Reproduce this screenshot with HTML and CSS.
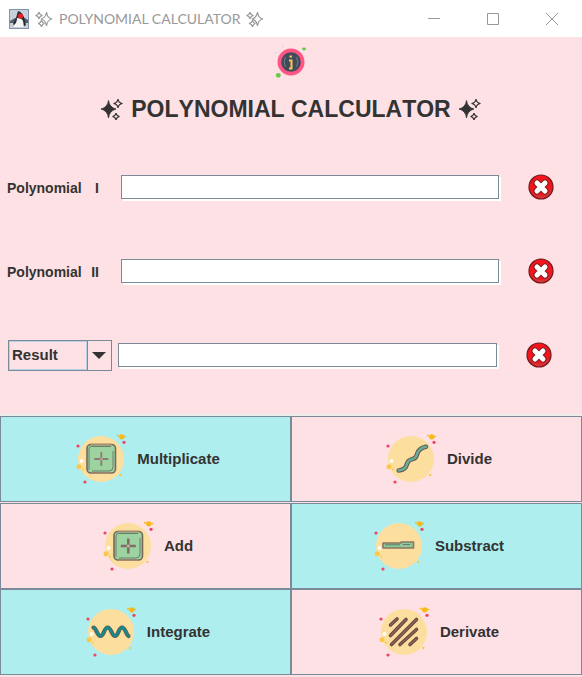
FILE: index.html
```html
<!DOCTYPE html>
<html lang="en">
<head>
<meta charset="utf-8">
<title>Polynomial Calculator</title>
<link rel="stylesheet" href="styles.css">
</head>
<body>
<svg class="defs" aria-hidden="true">
  <defs>
    <symbol id="sparkles" viewBox="0 0 22 22">
      <path d="M7.500 2.500Q8.500 9.500 15 11Q8.500 12.500 7.500 20Q6.500 12.500 0 11Q6.500 9.500 7.500 2.500Z" fill="currentColor" stroke="currentColor" stroke-width=".8"/>
      <path d="M17 1Q17.500 5 21.500 5.500Q17.500 6 17 10Q16.500 6 12.500 5.500Q16.500 5 17 1ZM15 15Q15.500 18 18.500 18.500Q15.500 19 15 22Q14.500 19 11.500 18.500Q14.500 18 15 15Z" fill="none" stroke="currentColor" stroke-width="1.200"/>
    </symbol>
    <symbol id="sparkles-outline" viewBox="0 0 18 18">
      <g fill="none" stroke="currentColor" stroke-width="1.200">
        <path d="M11.500 2Q12 8 17 9Q12 10 11.500 16Q10.500 10 6 9Q10.500 8 11.500 2Z"/>
        <path d="M4 2Q4.500 5 7.500 5.500Q4.500 6 4 9Q3.500 6 .5 5.500Q3.500 5 4 2ZM6.500 10Q7 13 9.500 13.500Q7 14 6.500 17Q6 14 3 13.500Q6 13 6.500 10Z"/>
      </g>
    </symbol>
    <symbol id="clear" viewBox="0 0 26 26">
      <circle cx="13" cy="13" r="12" fill="#f5141c" stroke="#6b1a1e" stroke-width="1.200"/>
      <path d="M2 15Q6 24 14 24Q22 23 24 15Q20 22 13 22Q6 22 2 15Z" fill="#c93a3f"/>
      <path d="M9 9L17 17M17 9L9 17" stroke="#7b2023" stroke-width="7" stroke-linecap="round"/>
      <path d="M9 9L17 17M17 9L9 17" stroke="#fff" stroke-width="5" stroke-linecap="round"/>
    </symbol>
    <symbol id="disc" viewBox="0 0 60 60">
      <circle cx="28" cy="30" r="23" fill="#fcdf9f"/>
      <g fill="#f0435f"><circle cx="5" cy="17" r="1.600"/><circle cx="51" cy="13.300" r="1.600"/><circle cx="12" cy="53" r="1.600"/></g>
      <g fill="#f8b914"><circle cx="48.700" cy="7.800" r="2.600"/><circle cx="45" cy="6.700" r="1"/><circle cx="52" cy="7.500" r="1"/></g>
      <g fill="#fcc74b"><circle cx="6" cy="37.800" r="2.500"/><circle cx="9.900" cy="40.500" r="1"/><circle cx="47.300" cy="46" r="1.200"/></g>
      <circle cx="8.600" cy="32" r="1.900" fill="#fffdf3"/>
    </symbol>
    <symbol id="plus-tile" viewBox="0 0 60 60">
      <rect x="14" y="15.500" width="28.500" height="28.500" rx="4" fill="#9dd2a1" stroke="#78665a" stroke-width="1.600"/>
      <path d="M16 41V20Q16 17.500 18.500 17.500H38M40 22V38Q40 42 36 42H19" fill="none" stroke="#687e68" stroke-width="1"/>
      <path d="M18 15.500H39M18 44.300H38" stroke="#a78b70" stroke-width="1.400"/>
    </symbol>
  </defs>
</svg>

<header class="titlebar">
  <svg class="app-icon" viewBox="0 0 20 20" aria-hidden="true">
    <rect width="20" height="20" fill="#8194a8"/>
    <rect x="1" y="1" width="18" height="18" fill="#c5d0db"/>
    <path d="M1 12L6 9L14 8L19 11V14H1Z" fill="#52606d"/>
    <path d="M9 2Q13 3 15 8L17 16L14 18H6L4 15L7 9Z" fill="#282c32"/>
    <path d="M8 9Q13 9 14 12L15 18H5V16Q8 14 8 9Z" fill="#f4f5f5"/>
    <circle cx="11.500" cy="7" r="2.600" fill="#e32228"/>
  </svg>
  <svg class="title-spark" aria-hidden="true"><use href="#sparkles-outline"/></svg>
  <span class="title-text">POLYNOMIAL CALCULATOR</span>
  <svg class="title-spark" aria-hidden="true"><use href="#sparkles-outline"/></svg>
  <div class="window-controls">
    <button type="button" aria-label="Minimize"><svg viewBox="0 0 12 12"><path d="M0 5.500H12"/></svg></button>
    <button type="button" aria-label="Maximize"><svg viewBox="0 0 12 12"><path d="M.5 .5H11.500V11.500H.5Z"/></svg></button>
    <button type="button" aria-label="Close"><svg viewBox="0 0 12 12"><path d="M0 0L12 12M12 0L0 12"/></svg></button>
  </div>
</header>

<main>
  <div class="intro">
    <button class="info" type="button" aria-label="Information">
      <svg viewBox="0 0 34 34">
        <circle cx="17" cy="17" r="13.500" fill="#ff5584"/>
        <circle cx="17" cy="17" r="9.800" fill="#414b5a"/>
        <path d="M11.500 12Q8.500 17 11.500 22M22.500 12Q25.500 17 22.500 22" fill="none" stroke="#6d8194" stroke-width="1"/>
        <path d="M15.500 11.500H18M15 15.500H17.500V23M15 23.500H18.500" fill="none" stroke="#ffc34f" stroke-width="2"/>
        <circle cx="4.300" cy="30.300" r="2.400" fill="#68c943"/>
        <ellipse cx="30" cy="4" rx="2" ry="1.400" fill="#68c943"/>
        <g fill="#cfe0e8"><circle cx="9" cy="1.500" r="1"/><circle cx="2" cy="8" r=".8"/><circle cx="30" cy="29" r=".8"/></g>
      </svg>
    </button>
    <h1>
      <svg aria-hidden="true"><use href="#sparkles"/></svg>
      <span>POLYNOMIAL CALCULATOR</span>
      <svg aria-hidden="true"><use href="#sparkles"/></svg>
    </h1>
  </div>

  <form class="fields">
    <div class="field">
      <label for="poly-1"><span>Polynomial</span><span>I</span></label>
      <input id="poly-1" type="text">
      <button class="clear" type="button" aria-label="Clear polynomial I"><svg><use href="#clear"/></svg></button>
    </div>
    <div class="field">
      <label for="poly-2"><span>Polynomial</span><span>II</span></label>
      <input id="poly-2" type="text">
      <button class="clear" type="button" aria-label="Clear polynomial II"><svg><use href="#clear"/></svg></button>
    </div>
    <div class="field result">
      <div class="combo">
        <select aria-label="Output"><option>Result</option></select>
        <svg viewBox="0 0 14 7" aria-hidden="true"><path d="M0 0H14L7 7Z"/></svg>
      </div>
      <input type="text" aria-label="Result">
      <button class="clear" type="button" aria-label="Clear result"><svg><use href="#clear"/></svg></button>
    </div>
  </form>

  <div class="operations">
    <div class="pair">
      <button class="blue" type="button">
        <svg viewBox="0 0 60 60"><use href="#disc"/><use href="#plus-tile"/><path d="M28.300 23V37M21.300 30H35.300" stroke="#8c7c70" stroke-width="1.800"/><circle cx="28.300" cy="30" r="1.500" fill="#b5a093"/></svg>
        Multiplicate
      </button>
      <button type="button">
        <svg viewBox="0 0 60 60"><use href="#disc"/><g fill="none" stroke-linecap="round"><path d="M15.700 41.500C22 41 23 38 24 35C25 30 28 31 31 29.500C35 28 33 23 37 20.500C39 18.500 40 18.500 43 17.800" stroke="#665a52" stroke-width="4.600"/><path d="M15.700 41.500C22 41 23 38 24 35C25 30 28 31 31 29.500C35 28 33 23 37 20.500C39 18.500 40 18.500 43 17.800" stroke="#68ae9b" stroke-width="2.400"/></g></svg>
        Divide
      </button>
    </div>
    <div class="pair">
      <button type="button">
        <svg viewBox="0 0 60 60"><use href="#disc"/><use href="#plus-tile"/><path d="M28.300 22.500V37.500M20.800 30H35.800" stroke="#806f66" stroke-width="2.600"/><circle cx="28.300" cy="30" r="1.600" fill="#c3b3a6"/></svg>
        Add
      </button>
      <button class="blue" type="button">
        <svg viewBox="0 0 60 60"><use href="#disc"/><path d="M12 27H30V26H42.500V32H12Z" fill="#8fc99b" stroke="#8a7560" stroke-width="1.600" stroke-linejoin="round"/><path d="M14 28.800H29M32 28.500H39" stroke="#607d67" stroke-width="1"/></svg>
        Substract
      </button>
    </div>
    <div class="pair">
      <button class="blue" type="button">
        <svg viewBox="0 0 60 60"><use href="#disc"/><g fill="none" stroke-linecap="round"><path d="M10.500 25.500C13 25 14 34 17.500 34C21 34 21 25.500 24.700 25.500C28.500 25.500 28.500 34 32 34C35.500 34 35.500 25.500 39 25.500C42.500 25.500 43 33 45.500 34" stroke="#6b594c" stroke-width="4.200"/><path d="M10.500 25.500C13 25 14 34 17.500 34C21 34 21 25.500 24.700 25.500C28.500 25.500 28.500 34 32 34C35.500 34 35.500 25.500 39 25.500C42.500 25.500 43 33 45.500 34" stroke="#0e8c8e" stroke-width="2.400"/></g></svg>
        Integrate
      </button>
      <button type="button">
        <svg viewBox="0 0 60 60"><use href="#disc"/><g stroke-linecap="round"><path d="M14.500 23L21 17M14.500 33.500L30 17.500M15.500 42.500L40.500 17.500M24 42.500L40.500 27.500M34 42.500L40.500 36.500" stroke="#69483f" stroke-width="3.600"/><path d="M14.500 23L21 17M14.500 33.500L30 17.500M15.500 42.500L40.500 17.500M24 42.500L40.500 27.500M34 42.500L40.500 36.500" stroke="#8b6659" stroke-width="1.200"/></g></svg>
        Derivate
      </button>
    </div>
  </div>
</main>
</body>
</html>
```
FILE: styles.css
```css
* { box-sizing: border-box; }

body {
  margin: 0;
  min-height: 100vh;
  background: #fee1e4;
  color: #333;
  font: bold 15px/20px "Liberation Sans", Arial, sans-serif;
}

button {
  padding: 0;
  border: 0;
  background: none;
  color: inherit;
  font: inherit;
}

svg { display: block; }
.defs { position: absolute; width: 0; height: 0; }

.titlebar {
  display: flex;
  align-items: center;
  height: 37px;
  padding: 0 1px 0 9px;
  background: #fff;
  color: #999;
}
.app-icon { width: 20px; height: 20px; margin-right: 6px; }
.title-spark { width: 18px; height: 18px; color: #999; }
.title-text {
  margin: 0 5px 0 6px;
  font: 400 14px/20px Lato, "Noto Sans", sans-serif;
}
.window-controls { display: flex; margin-left: auto; }
.window-controls button {
  display: grid;
  place-items: center;
  width: 59px;
  height: 36px;
}
.window-controls svg {
  width: 12px;
  height: 12px;
  fill: none;
  stroke: #999;
}

.intro {
  display: flex;
  flex-direction: column;
  align-items: center;
  padding-top: 8px;
}
.info svg { width: 34px; height: 34px; }
h1 {
  display: flex;
  align-items: center;
  gap: 8px;
  margin: 16px 0 22px;
  font-size: 23px;
  line-height: 28px;
  font-kerning: none;
}
h1 svg { width: 22px; height: 22px; }

.field {
  display: flex;
  align-items: center;
  height: 84px;
  padding: 0 2px 0 7px;
}
.field label {
  display: flex;
  justify-content: space-between;
  width: 92px;
  margin-right: 22px;
  padding-top: 2px;
  font-size: 14px;
}
.field input {
  flex: 1;
  min-width: 0;
  height: 24px;
  margin-right: 2px;
  padding: 0 4px;
  border: 1px solid #7a8a99;
  background: #fff;
  box-shadow: 2px 2px #fff;
  font: inherit;
}
.clear {
  display: grid;
  place-items: center;
  width: 79px;
  height: 32px;
}
.clear svg { width: 26px; height: 26px; }

.field.result { padding: 0 4px 0 8px; }
.combo {
  display: grid;
  grid-template-columns: 78px 1fr;
  align-items: center;
  width: 104px;
  height: 31px;
  margin-right: 6px;
  border: 1px solid #7a8a99;
}
.combo select {
  grid-area: 1 / 1 / 2 / 3;
  appearance: none;
  width: 78px;
  height: 29px;
  padding: 0 2px;
  border: 1px solid #b8cfe5;
  border-radius: 0;
  outline: 0;
  background: transparent;
  box-shadow: 1px 0 #7a8a99;
  color: inherit;
  font: inherit;
}
.combo svg {
  grid-area: 1 / 2;
  justify-self: center;
  width: 14px;
  height: 7px;
  fill: #333;
}

.operations {
  margin-top: 17px;
  border-top: 2px solid #eee;
}
.pair {
  display: grid;
  grid-template-columns: 1fr 1fr;
  height: 86px;
}
.pair:first-child { margin-bottom: 1px; }
.operations button {
  display: flex;
  align-items: center;
  justify-content: center;
  gap: 4px;
  padding-left: 2px;
  border: 1px solid #7a8a99;
}
.operations .blue { background: #afeeee; }
.operations svg { width: 60px; height: 60px; }
```
